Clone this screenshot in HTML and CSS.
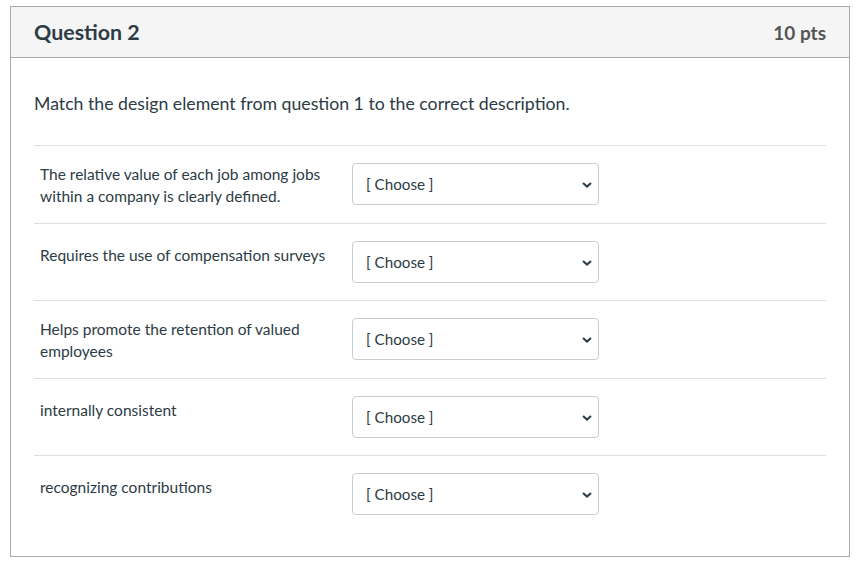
FILE: index.html
```html
<!DOCTYPE html>
<html lang="en">
<head>
<meta charset="utf-8">
<title>Question 2</title>
<link rel="stylesheet" href="styles.css">
</head>
<body>
<div class="question">
  <div class="q-header">
    <h2 class="q-title">Question 2</h2>
    <span class="q-points">10 pts</span>
  </div>
  <div class="q-body">
    <p class="q-prompt">Match the design element from question 1 to the correct description.</p>
    <div class="match-row">
      <div class="match-label">The relative value of each job among jobs within a company is clearly defined.</div>
      <div class="select-wrap">
        <select class="match-select"><option>[ Choose ]</option></select>
        <svg class="chev" width="10" height="6" viewBox="0 0 10 6"><path d="M1 1 L5 4.6 L9 1" fill="none" stroke="#2d3b45" stroke-width="2"/></svg>
      </div>
    </div>
    <div class="match-row">
      <div class="match-label single">Requires the use of compensation surveys</div>
      <div class="select-wrap">
        <select class="match-select"><option>[ Choose ]</option></select>
        <svg class="chev" width="10" height="6" viewBox="0 0 10 6"><path d="M1 1 L5 4.6 L9 1" fill="none" stroke="#2d3b45" stroke-width="2"/></svg>
      </div>
    </div>
    <div class="match-row">
      <div class="match-label">Helps promote the retention of valued employees</div>
      <div class="select-wrap">
        <select class="match-select"><option>[ Choose ]</option></select>
        <svg class="chev" width="10" height="6" viewBox="0 0 10 6"><path d="M1 1 L5 4.6 L9 1" fill="none" stroke="#2d3b45" stroke-width="2"/></svg>
      </div>
    </div>
    <div class="match-row">
      <div class="match-label single">internally consistent</div>
      <div class="select-wrap">
        <select class="match-select"><option>[ Choose ]</option></select>
        <svg class="chev" width="10" height="6" viewBox="0 0 10 6"><path d="M1 1 L5 4.6 L9 1" fill="none" stroke="#2d3b45" stroke-width="2"/></svg>
      </div>
    </div>
    <div class="match-row">
      <div class="match-label single">recognizing contributions</div>
      <div class="select-wrap">
        <select class="match-select"><option>[ Choose ]</option></select>
        <svg class="chev" width="10" height="6" viewBox="0 0 10 6"><path d="M1 1 L5 4.6 L9 1" fill="none" stroke="#2d3b45" stroke-width="2"/></svg>
      </div>
    </div>
  </div>
</div>
</body>
</html>
```

FILE: styles.css
```css
html, body {
  margin: 0;
  padding: 0;
  background: #ffffff;
}
body {
  font-family: Lato, "Open Sans", "Liberation Sans", sans-serif;
  color: #2d3b45;
}
.question {
  margin: 6px 0 0 10px;
  width: 840px;
  box-sizing: border-box;
  border: 1px solid #aaaaaa;
}
.q-header {
  box-sizing: border-box;
  background: #f5f5f5;
  border-bottom: 1px solid #aaaaaa;
  height: 51px;
  padding: 0 23px;
  display: flex;
  align-items: center;
  justify-content: space-between;
}
.q-title {
  margin: 0;
  font-size: 21.4px;
  font-weight: 700;
  color: #2d3b45;
  line-height: 26px;
}
.q-points {
  font-size: 19px;
  font-weight: 700;
  color: #555555;
  line-height: 22px;
  position: relative;
  top: 1px;
}
.q-body {
  padding: 34px 23px 23px;
}
.q-prompt {
  margin: 0 0 29px;
  font-size: 17.7px;
  line-height: 24px;
}
.match-row {
  display: flex;
  align-items: flex-start;
  box-sizing: border-box;
  height: 77.5px;
  border-top: 1px solid #dddddd;
  padding-top: 17px;
}
.match-label {
  width: 318px;
  box-sizing: border-box;
  padding: 0 6px;
  font-size: 15.5px;
  line-height: 22px;
}
.match-label.single {
  padding-top: 3px;
}
.select-wrap {
  position: relative;
  width: 247px;
  height: 42px;
}
.match-select {
  -webkit-appearance: none;
  appearance: none;
  width: 100%;
  height: 42px;
  box-sizing: border-box;
  border: 1px solid #c7cdd1;
  border-radius: 4px;
  background: #ffffff;
  padding: 0 30px 0 13px;
  font-family: Lato, "Open Sans", "Liberation Sans", sans-serif;
  font-size: 15.2px;
  color: #2d3b45;
  margin: 0;
}
.chev {
  position: absolute;
  right: 7px;
  top: 19px;
  pointer-events: none;
}
```
